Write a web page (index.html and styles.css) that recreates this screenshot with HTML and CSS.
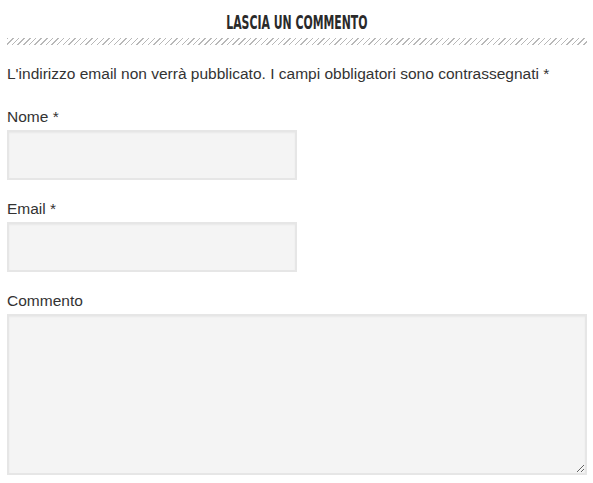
FILE: index.html
```html
<!DOCTYPE html>
<html lang="it">
<head>
    <meta charset="UTF-8">
    <meta name="viewport" content="width=device-width, initial-scale=1.0">
    <title>Lascia un commento</title>
    <link rel="stylesheet" href="styles.css">
</head>
<body>
    <div class="respond">
        <h3 class="reply-title"><span>Lascia un commento</span></h3>
        <form class="comment-form" onsubmit="event.preventDefault();">
            <p class="comment-notes">L'indirizzo email non verrà pubblicato. I campi obbligatori sono contrassegnati *</p>
            <p class="comment-field">
                <label for="author">Nome *</label>
                <input type="text" id="author" class="short-input" required>
            </p>
            <p class="comment-field">
                <label for="email">Email *</label>
                <input type="email" id="email" class="short-input" required>
            </p>
            <p class="comment-field">
                <label for="comment">Commento</label>
                <textarea id="comment"></textarea>
            </p>
        </form>
    </div>
</body>
</html>
```

FILE: styles.css
```css
* {
    margin: 0;
    padding: 0;
    box-sizing: border-box;
}

body {
    background: #fff;
    color: #333;
    font-family: 'Liberation Sans', Arial, sans-serif;
    font-size: 15.5px;
    overflow: hidden;
}

.respond {
    width: 580px;
    margin-left: 7px;
    padding-top: 12px;
}

.reply-title {
    font-family: 'DejaVu Sans Condensed', sans-serif;
    font-weight: 700;
    font-size: 19.5px;
    line-height: 22px;
    text-transform: uppercase;
    text-align: center;
    color: #2a2a2a;
    padding-bottom: 6px;
}

/* condensed display face isn't installed, so squeeze the condensed one */
.reply-title span {
    display: inline-block;
    transform: scaleX(0.62);
    white-space: nowrap;
}

.reply-title::after {
    content: "";
    display: block;
    height: 7px;
    margin-top: 4px;
    background: repeating-linear-gradient(135deg, #b8b8b8 0, #b8b8b8 1px, transparent 1px, transparent 4px);
}

.comment-form {
    display: flex;
    flex-direction: column;
}

.comment-notes {
    line-height: 20px;
    margin-top: 13px;
    margin-bottom: 24px;
}

.comment-field {
    display: flex;
    flex-direction: column;
    gap: 4px;
    margin-bottom: 20px;
}

.comment-field:last-child {
    margin-bottom: 0;
}

.comment-field label {
    line-height: 18px;
}

.short-input,
.comment-field textarea {
    background: #f4f4f4;
    border: 2px solid #e6e6e6;
    box-shadow: inset 0 1px 2px rgba(0, 0, 0, 0.05);
    font: inherit;
    color: #333;
    outline: none;
}

.short-input {
    width: 290px;
    height: 50px;
}

.comment-field textarea {
    width: 580px;
    height: 161px;
}
```
